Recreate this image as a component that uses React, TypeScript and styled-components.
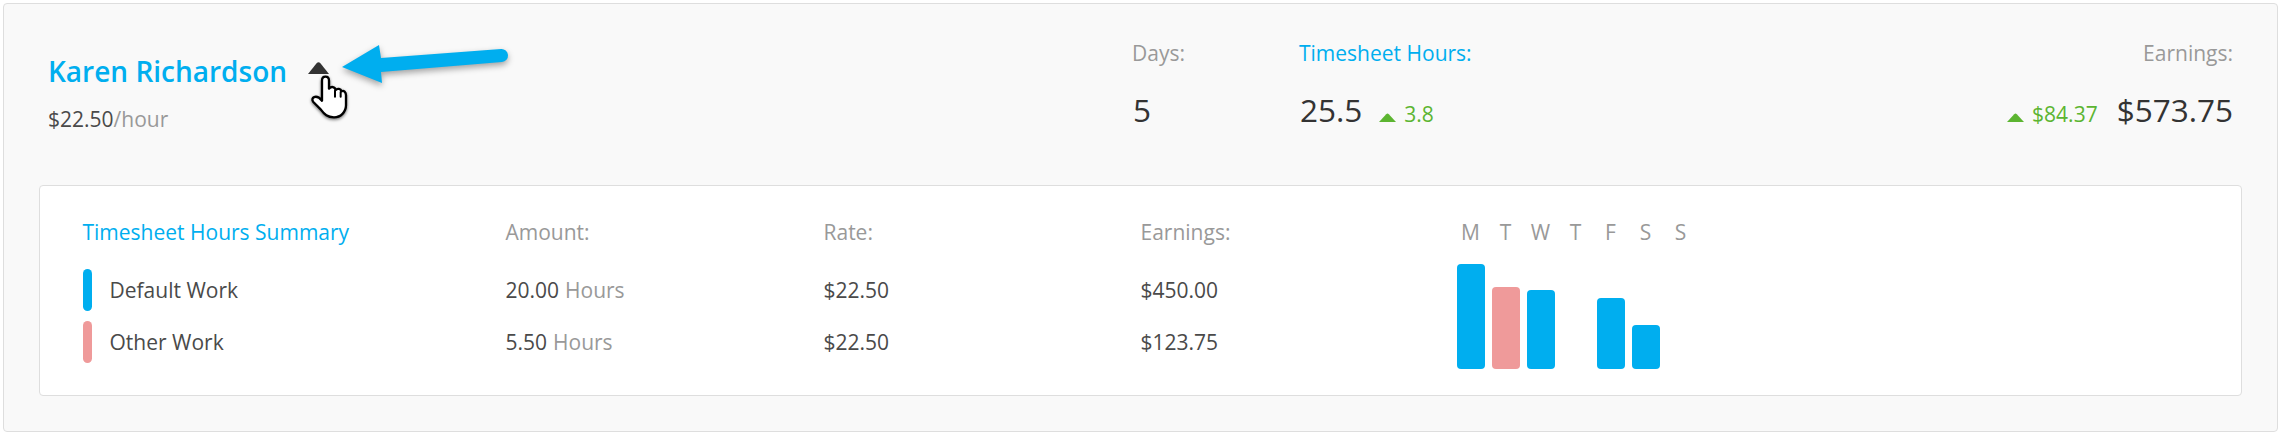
import React from "react";
import styled, { createGlobalStyle } from "styled-components";

const Global = createGlobalStyle`
  html, body { margin: 0; padding: 0; background: #ffffff; }
  body { font-family: "Open Sans", "Noto Sans", sans-serif; font-size: 21px; line-height: 28px; color: #333333; }
`;

const BLUE = "#00aeef";
const PINK = "#ef9a9a";
const GREEN = "#5cb531";
const GRAY = "#999999";
const BODY = "#4a4a4a";

const Panel = styled.section`
  position: relative;
  box-sizing: border-box;
  width: 2275px;
  height: 429px;
  margin: 3px 0 0 3px;
  background: #f9f9f9;
  border: 1.5px solid #dedede;
  border-radius: 4px;
`;

const Header = styled.header`
  box-sizing: border-box;
  height: 180.5px;
  padding: 35px 44px 0 44px;
  display: grid;
  grid-template-columns: 1084px 167px 300px 1fr;
`;

const Person = styled.div`
  padding-top: 14px;
`;

const NameRow = styled.div`
  display: flex;
  align-items: flex-start;
  margin-bottom: 16px;
`;

const Name = styled.a`
  font-size: 28px;
  line-height: 36px;
  font-weight: 600;
  color: ${BLUE};
`;

const ToggleCaret = styled.svg`
  width: 21px;
  height: 12px;
  margin: 9px 0 0 21px;
  fill: #333333;
`;

const Rate = styled.div`
  color: ${BODY};
`;

const Muted = styled.span`
  color: ${GRAY};
`;

const Stat = styled.div<{ $right?: boolean }>`
  display: flex;
  flex-direction: column;
  align-items: ${(p) => (p.$right ? "flex-end" : "flex-start")};
`;

const StatLabel = styled.div<{ $active?: boolean }>`
  color: ${(p) => (p.$active ? BLUE : GRAY)};
  margin-bottom: 23px;
`;

const StatLine = styled.div`
  display: flex;
  align-items: baseline;
`;

const StatValue = styled.div`
  font-size: 31.5px;
  line-height: 40px;
  color: #333333;
  padding-left: 1px;
`;

const Delta = styled.div<{ $lead?: boolean }>`
  display: flex;
  align-items: baseline;
  gap: 8px;
  color: ${GREEN};
  margin: ${(p) => (p.$lead ? "0 18px 0 0" : "0 0 0 17px")};
`;

const DeltaCaret = styled.svg`
  width: 17px;
  height: 9px;
  margin-bottom: 5px;
  fill: ${GREEN};
`;

const Card = styled.div`
  box-sizing: border-box;
  width: 2203px;
  height: 211.5px;
  margin-left: 34.5px;
  padding: 32.5px 0 0 43px;
  background: #ffffff;
  border: 1.5px solid #dedede;
  border-radius: 4px;
  display: grid;
  grid-template-columns: 423px 318px 317px 316px 250px;
  grid-template-rows: 40px 42px 42px;
  row-gap: 10.5px;
`;

const ColumnTitle = styled.div<{ $active?: boolean }>`
  color: ${(p) => (p.$active ? BLUE : GRAY)};
`;

const WorkType = styled.div`
  display: flex;
  align-items: center;
  gap: 18px;
  color: ${BODY};
`;

const Pill = styled.span<{ $color: string }>`
  width: 9px;
  height: 42px;
  border-radius: 5px;
  background: ${(p) => p.$color};
`;

const Cell = styled.div`
  display: flex;
  align-items: center;
  gap: 6px;
  color: ${BODY};
`;

const Chart = styled.div`
  grid-column: 5;
  grid-row: 1 / span 3;
  display: flex;
  gap: 7px;
`;

const Day = styled.div`
  width: 28px;
  display: flex;
  flex-direction: column;
  align-items: center;
`;

const DayLabel = styled.div`
  color: ${GRAY};
`;

const BarSlot = styled.div`
  width: 100%;
  height: 105px;
  flex-shrink: 0;
  margin-top: 18px;
  display: flex;
  align-items: flex-end;
`;

const Bar = styled.div<{ $h: number; $color: string }>`
  width: 100%;
  height: ${(p) => p.$h}px;
  background: ${(p) => p.$color};
  border-radius: 4px;
`;

const Annotation = styled.svg`
  position: absolute;
  left: 296px;
  top: 36px;
  width: 230px;
  height: 100px;
  overflow: visible;
`;

const ArrowShape = styled.path`
  fill: ${BLUE};
  filter: drop-shadow(0 3px 3px rgba(0, 0, 0, 0.35));
`;

const HandGroup = styled.g`
  filter: drop-shadow(0 4px 4px rgba(0, 0, 0, 0.55));
`;

const HandOutline = styled.path`
  fill: #ffffff;
  stroke: #000000;
  stroke-width: 7;
  stroke-linejoin: round;
  stroke-linecap: round;
`;

const HandCrease = styled.path`
  fill: none;
  stroke: #000000;
  stroke-width: 6;
  stroke-linecap: round;
`;

const up = <path d="M0 9 L7.2 1.2 Q8.5 0 9.8 1.2 L17 9 Z" />;

const rows = [
  { name: "Default Work", color: BLUE, amount: "20.00", rate: "$22.50", earn: "$450.00" },
  { name: "Other Work", color: PINK, amount: "5.50", rate: "$22.50", earn: "$123.75" },
];

const days = [
  { d: "M", h: 105, c: BLUE },
  { d: "T", h: 82, c: PINK },
  { d: "W", h: 79, c: BLUE },
  { d: "T", h: 0, c: BLUE },
  { d: "F", h: 71, c: BLUE },
  { d: "S", h: 44, c: BLUE },
  { d: "S", h: 0, c: BLUE },
];

export default function App() {
  return (
    <>
      <Global />
      <Panel>
        <Header>
          <Person>
            <NameRow>
              <Name>Karen Richardson</Name>
              <ToggleCaret viewBox="0 0 21 12">
                <path d="M0 12 L8.8 1 Q10.5 -0.6 12.2 1 L21 12 Z" />
              </ToggleCaret>
            </NameRow>
            <Rate>
              $22.50<Muted>/hour</Muted>
            </Rate>
          </Person>
          <Stat>
            <StatLabel>Days:</StatLabel>
            <StatValue>5</StatValue>
          </Stat>
          <Stat>
            <StatLabel $active>Timesheet Hours:</StatLabel>
            <StatLine>
              <StatValue>25.5</StatValue>
              <Delta>
                <DeltaCaret viewBox="0 0 17 9">{up}</DeltaCaret>
                3.8
              </Delta>
            </StatLine>
          </Stat>
          <Stat $right>
            <StatLabel>Earnings:</StatLabel>
            <StatLine>
              <Delta $lead>
                <DeltaCaret viewBox="0 0 17 9">{up}</DeltaCaret>
                $84.37
              </Delta>
              <StatValue>$573.75</StatValue>
            </StatLine>
          </Stat>
        </Header>
        <Card>
          <ColumnTitle $active>Timesheet Hours Summary</ColumnTitle>
          <ColumnTitle>Amount:</ColumnTitle>
          <ColumnTitle>Rate:</ColumnTitle>
          <ColumnTitle>Earnings:</ColumnTitle>
          <Chart>
            {days.map((x, i) => (
              <Day key={i}>
                <DayLabel>{x.d}</DayLabel>
                <BarSlot>{x.h > 0 && <Bar $h={x.h} $color={x.c} />}</BarSlot>
              </Day>
            ))}
          </Chart>
          {rows.map((r) => (
            <React.Fragment key={r.name}>
              <WorkType>
                <Pill $color={r.color} />
                {r.name}
              </WorkType>
              <Cell>
                {r.amount} <Muted>Hours</Muted>
              </Cell>
              <Cell>{r.rate}</Cell>
              <Cell>{r.earn}</Cell>
            </React.Fragment>
          ))}
        </Card>
        <Annotation viewBox="300 40 230 100">
          <ArrowShape d="M342 67 L379 45 L381 58 L501 49 A6.5 6.5 0 0 1 502 62 L381 72 L382 83 Z" />
          <HandGroup transform="translate(290 30) scale(0.3333)">
            <HandOutline d="M96 205 L96 152 C96 136 117 136 117 152 L117 176 C124 168 135 170 137 180 C142 174 152 176 155 184 C161 180 168 186 168 196 L168 226 C168 246 152 262 132 262 C112 262 104 254 92 238 L70 216 C60 204 78 190 96 212 Z" />
            <HandCrease d="M135 182 L135 200 M152 186 L152 200" />
          </HandGroup>
        </Annotation>
      </Panel>
    </>
  );
}
